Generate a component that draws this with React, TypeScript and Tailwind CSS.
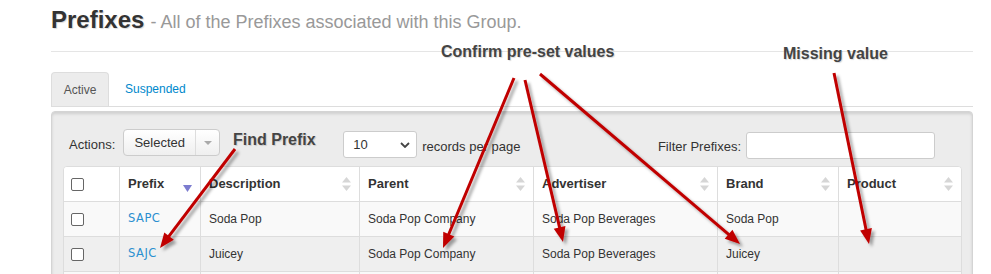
import React from "react";

const F = { fontFamily: '"Liberation Sans", Arial, sans-serif' };

function SortIcon() {
  return (
    <svg width="9" height="14" viewBox="0 0 9 14" className="shrink-0">
      <path d="M4.5 0 L9 5.5 L0 5.5 Z" fill="#d6d6d6" />
      <path d="M4.5 14 L9 8.5 L0 8.5 Z" fill="#d6d6d6" />
    </svg>
  );
}

function Checkbox() {
  return <div className="w-[13px] h-[13px] border border-[#666] rounded-[2px] bg-white" />;
}

const cols = [
  { w: "w-[55px]", label: "" },
  { w: "w-[81px]", label: "Prefix" },
  { w: "w-[159px]", label: "Description" },
  { w: "w-[174px]", label: "Parent" },
  { w: "w-[184px]", label: "Advertiser" },
  { w: "w-[121px]", label: "Brand" },
  { w: "w-[123px]", label: "Product" },
];

const rows = [
  { prefix: "SAPC", desc: "Soda Pop", parent: "Soda Pop Company", adv: "Soda Pop Beverages", brand: "Soda Pop", product: "", bg: "bg-[#f9f9f9]" },
  { prefix: "SAJC", desc: "Juicey", parent: "Soda Pop Company", adv: "Soda Pop Beverages", brand: "Juicey", product: "", bg: "bg-[#efefef]" },
  { prefix: "", desc: "", parent: "", adv: "", brand: "", product: "", bg: "bg-[#f9f9f9]" },
];

function Arrow({ x1, y1, x2, y2 }: { x1: number; y1: number; x2: number; y2: number }) {
  const dx = x2 - x1;
  const dy = y2 - y1;
  const len = Math.sqrt(dx * dx + dy * dy);
  const ux = dx / len;
  const uy = dy / len;
  const hl = 15;
  const hw = 6;
  const bx = x2 - ux * hl;
  const by = y2 - uy * hl;
  const px = -uy;
  const py = ux;
  const pts = `${x2},${y2} ${bx + px * hw},${by + py * hw} ${bx - px * hw},${by - py * hw}`;
  return (
    <g filter="url(#sh)">
      <line x1={x1} y1={y1} x2={bx + ux * 2} y2={by + uy * 2} stroke="#c00000" strokeWidth="3" />
      <polygon points={pts} fill="#c00000" />
    </g>
  );
}

export default function App() {
  return (
    <div className="relative w-[991px] h-[274px] overflow-hidden bg-white" style={F}>
      <div className="pl-[51px] w-[973px]">
        <div className="pt-[4px] pb-[15px] border-b border-[#e5e5e5] flex items-baseline gap-[6px]">
          <span className="text-[24px] leading-[32px] font-bold text-[#333]" style={{ textShadow: "1px 1px 1px rgba(0,0,0,0.15)" }}>Prefixes</span>
          <span className="text-[18px] text-[#999]">- All of the Prefixes associated with this Group.</span>
        </div>
        <div className="mt-[20px] flex items-end border-b border-[#ddd] h-[35px]">
          <div className="h-[34px] w-[58px] bg-[#ececec] border border-b-0 border-[#ddd] rounded-t-[4px] flex items-center justify-center text-[12px] text-[#555]">Active</div>
          <div className="h-[34px] px-[16px] flex items-center text-[12px] text-[#0088cc]">Suspended</div>
        </div>
        <div className="mt-[4px] bg-[#ececec] border border-[#d4d4d4] rounded-[4px] h-[200px] pt-[17px] pl-[11px] pr-[10px]" style={{ boxShadow: "inset 0 2px 3px rgba(0,0,0,0.12)" }}>
          <div className="flex items-start h-[27px]">
            <span className="text-[13px] text-[#333] mt-[6px] ml-[6px]">Actions:</span>
            <div className="ml-[8px] flex h-[27px] w-[97px] border border-[#ccc] rounded-[4px] bg-gradient-to-b from-white to-[#efefef]">
              <div className="w-[72px] flex items-center justify-center text-[13px] text-[#333] border-r border-[#ddd]">Selected</div>
              <div className="flex-1 flex items-center justify-center">
                <svg width="8" height="4" viewBox="0 0 8 4"><path d="M0 0 L8 0 L4 4 Z" fill="#aaa" /></svg>
              </div>
            </div>
            <div className="ml-[123px] mt-[2px] h-[27px] w-[74px] border border-[#ccc] rounded-[3px] bg-white flex items-center justify-between pl-[9px] pr-[6px]">
              <span className="text-[13px] text-[#333]">10</span>
              <svg width="10" height="6" viewBox="0 0 10 6"><path d="M1 1 L5 5 L9 1" fill="none" stroke="#444" strokeWidth="1.8" /></svg>
            </div>
            <span className="ml-[5px] mt-[8px] text-[13px] text-[#333]">records per page</span>
            <span className="ml-auto mt-[8px] text-[13px] text-[#333]">Filter Prefixes:</span>
            <div className="ml-[5px] mt-[3px] h-[27px] w-[189px] border border-[#ccc] rounded-[3px] bg-white mr-[27px]" />
          </div>
          <div className="mt-[10px] w-[899px] border border-[#ddd] rounded-t-[4px] bg-white overflow-hidden">
            <div className="flex h-[35px] bg-white border-b border-[#ddd]">
              {cols.map((c, i) => (
                <div key={i} className={`${c.w} shrink-0 flex items-center ${i > 0 ? "border-l border-[#ddd] pl-[8px] pr-[8px] justify-between" : "pl-[7px]"}`}>
                  {i === 0 ? (
                    <Checkbox />
                  ) : (
                    <>
                      <span className="text-[13px] font-bold text-[#333]">{c.label}</span>
                      {i === 1 ? (
                        <svg width="9" height="7" viewBox="0 0 9 7" className="mt-[8px]"><path d="M0 0 L9 0 L4.5 7 Z" fill="#7c7ccf" /></svg>
                      ) : (
                        <SortIcon />
                      )}
                    </>
                  )}
                </div>
              ))}
            </div>
            {rows.map((r, ri) => {
              const cells = [r.prefix, r.desc, r.parent, r.adv, r.brand, r.product];
              return (
                <div key={ri} className={`flex h-[35px] border-b border-[#ddd] ${r.bg}`}>
                  <div className="w-[55px] shrink-0 flex items-center pl-[7px]">
                    <Checkbox />
                  </div>
                  {cells.map((t, ci) => (
                    <div key={ci} className={`${cols[ci + 1].w} shrink-0 flex items-center border-l border-[#ddd] pl-[8px]`}>
                      {ci === 0 ? (
                        <span className="text-[11.5px] tracking-[0.5px] text-[#2a8fd0]" style={{ fontFamily: '"DejaVu Sans", Verdana, sans-serif' }}>{t}</span>
                      ) : (
                        <span className="text-[12px] text-[#333]">{t}</span>
                      )}
                    </div>
                  ))}
                </div>
              );
            })}
          </div>
        </div>
      </div>

      <span className="absolute left-[441px] top-[40px] text-[16px] font-bold text-[#444]" style={{ textShadow: "1px 1px 1px rgba(0,0,0,0.15)" }}>Confirm pre-set values</span>
      <span className="absolute left-[783px] top-[42px] text-[16px] font-bold text-[#444]" style={{ textShadow: "1px 1px 1px rgba(0,0,0,0.15)" }}>Missing value</span>
      <span className="absolute left-[233px] top-[128px] text-[16px] font-bold text-[#444]" style={{ textShadow: "1px 1px 1px rgba(0,0,0,0.15)" }}>Find Prefix</span>

      <svg className="absolute inset-0 pointer-events-none" width="991" height="274" viewBox="0 0 991 274">
        <defs>
          <filter id="sh" x="-20%" y="-20%" width="140%" height="140%">
            <feDropShadow dx="3" dy="3" stdDeviation="1.5" floodColor="#000" floodOpacity="0.35" />
          </filter>
        </defs>
        <Arrow x1={235} y1={149} x2={160} y2={248} />
        <Arrow x1={514} y1={78} x2={443} y2={248} />
        <Arrow x1={525} y1={80} x2={563} y2={242} />
        <Arrow x1={540} y1={74} x2={740} y2={244} />
        <Arrow x1={834} y1={73} x2={869} y2={244} />
      </svg>
    </div>
  );
}
